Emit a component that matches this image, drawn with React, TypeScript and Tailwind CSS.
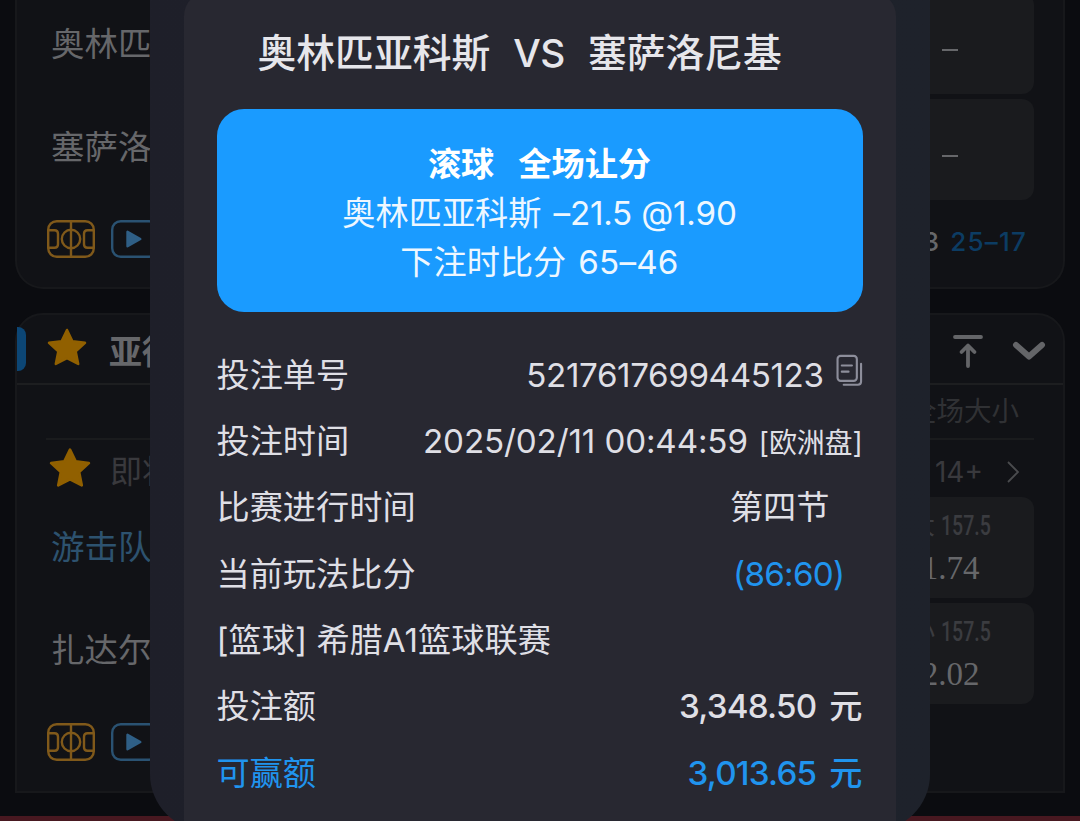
import type { ReactNode } from "react";

const Star = ({ className }: { className: string }) => (
  <svg viewBox="0 0 40 38" className={className} fill="#916000" stroke="#916000" strokeWidth="2.5" strokeLinejoin="round">
    <path d="M20 2 L25.4 13.2 L38 14.8 L28.7 23.4 L31.2 36 L20 30.2 L8.8 36 L11.3 23.4 L2 14.8 L14.6 13.2 Z" />
  </svg>
);

const CourtIcon = () => (
  <svg viewBox="0 0 48 38" className="h-[38px] w-12" fill="none" stroke="#80591a" strokeWidth="2.4">
    <rect x="1.2" y="1.2" width="45.6" height="35.6" rx="8.5" />
    <path d="M24 1.2V36.8" />
    <circle cx="24" cy="19" r="9.2" />
    <path d="M1.2 10.2H7.5Q11 10.2 11 13.7V24.3Q11 27.8 7.5 27.8H1.2" />
    <path d="M46.8 10.2H40.5Q37 10.2 37 13.7V24.3Q37 27.8 40.5 27.8H46.8" />
  </svg>
);

const PlayIcon = () => (
  <svg viewBox="0 0 48 38" className="h-[38px] w-12" fill="none" stroke="#2a5272" strokeWidth="2.4">
    <rect x="1.2" y="1.2" width="45.6" height="35.6" rx="8.5" />
    <path d="M16.5 11.8V26.2L29.3 19Z" fill="#2f5f86" stroke="#2f5f86" strokeLinejoin="round" />
  </svg>
);

const CopyIcon = () => (
  <svg viewBox="0 0 28 34" className="mb-[11px] h-[33px] w-[27px]" fill="none" stroke="#8d8e9b" strokeWidth="2.2" strokeLinecap="round">
    <rect x="1.6" y="1.8" width="20" height="26" rx="3.2" />
    <path d="M6 11.8H16.5M6 18.2H13" />
    <path d="M26 10V28.5Q26 31.8 22.7 31.8H8" />
  </svg>
);

const MediaIcons = () => (
  <div className="flex gap-4 pl-[30px]">
    <CourtIcon />
    <PlayIcon />
  </div>
);

const Team = ({ name, className }: { name: string; className: string }) => (
  <div className={`flex h-[103px] items-center pl-[34px] text-[33.5px] ${className}`}>{name}</div>
);

const OddsBox = ({ label, value }: { label?: string; value?: string }) => (
  <div className="flex h-[101px] w-[168px] flex-col items-center justify-center rounded-xl bg-[#1a1b1e] text-[#66676a]">
    {label ? (
      <>
        <div className="flex h-[42px] items-center gap-1.5 pl-px text-[25px] text-[#3b3c40]">
          <span>{label}</span>
          <span className="-mr-3 inline-block w-[62px] origin-left scale-x-[0.71] font-[Roboto] text-[27.5px] font-medium">157.5</span>
        </div>
        <div className="flex h-[44px] items-center pl-px font-['Liberation_Serif'] text-[33px]">{value}</div>
      </>
    ) : (
      <span className="mt-3 h-[2px] w-4 bg-[#66676a]" />
    )}
  </div>
);

const MatchList = () => (
  <div className="h-full px-[15px]">
    <div className="h-[289px] rounded-b-[28px] border-2 border-t-0 border-[#17181b] bg-[#111216]">
      <div className="flex h-[200px] items-start justify-between pr-[29px]">
        <div className="-mt-[7px]">
          <Team name="奥林匹亚科斯" className="text-[#66676a]" />
          <Team name="塞萨洛尼基" className="text-[#66676a]" />
        </div>
        <div className="-mt-[7px] flex flex-col gap-[5px]">
          <OddsBox />
          <OddsBox />
        </div>
      </div>
      <div className="flex items-center justify-between pr-[36px] pt-4">
        <MediaIcons />
        <div className="pt-1.5 text-[26px] font-medium tracking-[1.2px] text-[#66676a]">
          3<span className="pl-2.5 text-[#0c3c63]">25–17</span>
        </div>
      </div>
    </div>

    <div className="mt-6 h-[480px] rounded-t-[28px] border-2 border-[#17181b] bg-[#111216]">
      <div className="flex h-[70px] items-center border-b-2 border-[#1d1e20] pr-[17px]">
        <div className="h-11 w-[9px] rounded-r-lg bg-[#0c4675]" />
        <Star className="-mt-[5px] ml-[21px] h-[38px] w-10" />
        <div className="ml-[22px] pt-2 text-[33px] font-bold text-[#66676a]">亚得里</div>
        <div className="ml-auto flex items-center gap-[29px] pt-1">
          <svg viewBox="0 0 30 34" className="h-[34px] w-[30px]" fill="none" stroke="#646568" strokeWidth="3.8" strokeLinecap="round" strokeLinejoin="round">
            <path d="M2 3H28M15 32V12M8.5 18L15 11.5L21.5 18" />
          </svg>
          <svg viewBox="0 0 34 20" className="h-5 w-[34px]" fill="none" stroke="#646568" strokeWidth="6" strokeLinecap="round" strokeLinejoin="round">
            <path d="M4 4L17 15.5L30 4" />
          </svg>
        </div>
      </div>
      <div className="mx-[29px] flex h-[55px] items-center justify-end border-b-2 border-[#1a1b1d] pr-[15px] text-[27.5px] text-[#303134]">
        全场大小
      </div>
      <div className="flex h-[57px] items-center pl-8 pr-11 pt-[7px] text-[#39393d]">
        <Star className="-mt-2.5 h-[41px] w-[42px]" />
        <div className="ml-[19px] text-[32px]">即将</div>
        <div className="ml-auto text-[28px]">14+</div>
        <svg viewBox="0 0 12 22" className="ml-6 h-[22px] w-3" fill="none" stroke="#4a4b4e" strokeWidth="1.8">
          <path d="M1 1L11 11L1 21" />
        </svg>
      </div>
      <div className="flex h-[206px] items-start justify-between pr-[29px]">
        <div className="-mt-px">
          <Team name="游击队" className="text-[#2d526f]" />
          <Team name="扎达尔" className="text-[#66676a]" />
        </div>
        <div className="flex flex-col gap-[5px]">
          <OddsBox label="大" value="1.74" />
          <OddsBox label="小" value="2.02" />
        </div>
      </div>
      <div className="mt-5">
        <MediaIcons />
      </div>
    </div>
    <div className="-mx-[15px] mt-[23px] h-[5px] bg-[#481820]" />
  </div>
);

const Row = ({ label, blue, children }: { label: string; blue?: boolean; children?: ReactNode }) => (
  <div className={`flex h-[66.3px] items-center justify-between ${blue ? "text-[#2094ee]" : "text-[#dfdfe5]"}`}>
    <span>{label}</span>
    {children}
  </div>
);

const Amount = ({ value }: { value: string }) => (
  <span className="flex gap-[13px] font-medium">
    <span className="tracking-[-0.8px]">{value}</span>
    <span>元</span>
  </span>
);

const BetTicket = () => (
  <div className="absolute left-[149.5px] -top-6 h-[855px] w-[780.5px] rounded-b-[57px] bg-linear-to-r from-[#1e1f29] to-[#1e222b] px-[34px] pt-4">
    <div className="h-full rounded-t-[24px] bg-[#282831] px-[33px] text-[33.2px]">
      <h1 className="flex h-[117px] items-center gap-[23px] pl-[41px] pt-1.5 text-[38.8px] font-medium text-[#e6e6eb]">
        <span>奥林匹亚科斯</span>
        <span className="tracking-[-0.5px]">VS</span>
        <span>塞萨洛尼基</span>
      </h1>
      <div className="h-[203px] w-[646px] rounded-[27px] bg-[#1a9bff] pt-[31px] text-center leading-[49px] text-white">
        <p className="flex justify-center gap-6 font-bold">
          <span>滚球</span>
          <span>全场让分</span>
        </p>
        <p className="text-[#eef7ff]">奥林匹亚科斯<span className="pl-3 tracking-[-0.2px]">–21.5 @1.90</span></p>
        <p className="text-[#eef7ff]">下注时比分<span className="pl-3 tracking-[0.2px]">65–46</span></p>
      </div>
      <div className="w-[646px] pt-[30.5px]">
        <Row label="投注单号">
          <span className="flex items-center gap-3 tracking-[-0.4px]">
            5217617699445123
            <CopyIcon />
          </span>
        </Row>
        <Row label="投注时间">
          <span className="tracking-[-0.15px]">
            2025/02/11 00:44:59<span className="pl-[11px] text-[28px]">[欧洲盘]</span>
          </span>
        </Row>
        <Row label="比赛进行时间">
          <span className="pr-[33px]">第四节</span>
        </Row>
        <Row label="当前玩法比分">
          <span className="pr-[18px] tracking-[-0.7px] text-[#2094ee]">(86:60)</span>
        </Row>
        <Row label="[篮球] 希腊A1篮球联赛" />
        <Row label="投注额">
          <Amount value="3,348.50" />
        </Row>
        <Row label="可赢额" blue>
          <Amount value="3,013.65" />
        </Row>
      </div>
    </div>
  </div>
);

const App = () => {
  return (
    <div className="relative h-[821px] w-[1080px] overflow-hidden bg-[#0b0c10] font-[Inter,'Noto_Sans_CJK_SC',sans-serif] whitespace-nowrap">
      <MatchList />
      <BetTicket />
    </div>
  )
}

export default App
